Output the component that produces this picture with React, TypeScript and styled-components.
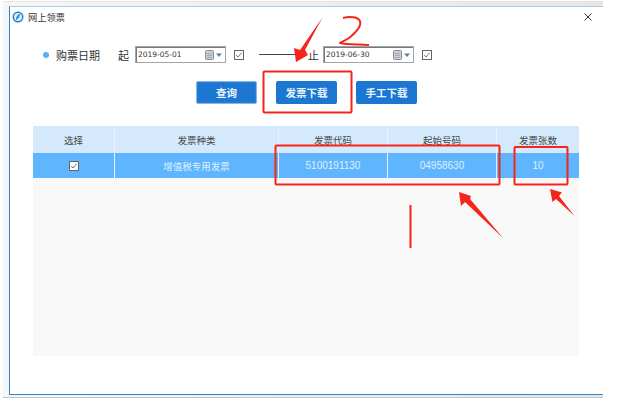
import React from "react";
import styled, { createGlobalStyle } from "styled-components";

const Global = createGlobalStyle`
  html, body { margin: 0; padding: 0; background: #fff; }
  body { font-family: "Noto Sans CJK SC", "Liberation Sans", sans-serif; }
`;

const Page = styled.div`
  position: relative;
  width: 624px;
  height: 412px;
  overflow: hidden;
  background: #fff;
  padding: 1px 21px 14px 3px;
  box-sizing: border-box;
`;

const Shadow = styled.div`
  height: 100%;
  box-sizing: border-box;
  background: linear-gradient(90deg, #f6f6f6, #e6e6e6);
  padding: 4px 0 2px 6px;
  border-bottom: 1px solid #c4c4c4;
  border-top: 1px solid #e4e4e4;
`;

const Window = styled.div`
  height: 100%;
  box-sizing: border-box;
  background: #fff;
  border-left: 1px solid #2f86d0;
  border-top: 1px solid #a9cbe6;
  border-bottom: 1px solid #2f86d0;
  display: flex;
  flex-direction: column;
`;

const TitleBar = styled.div`
  height: 19px;
  display: flex;
  align-items: center;
  padding: 0 11px 0 2px;
  gap: 4px;
  font-size: 9.25px;
  color: #333;
`;

const TitleText = styled.span`
  flex: 1;
  line-height: 12px;
`;

const DateRow = styled.div`
  display: flex;
  align-items: center;
  height: 17px;
  margin-top: 20px;
  padding-left: 33px;
`;

const Dot = styled.span`
  width: 6px;
  height: 6px;
  border-radius: 50%;
  background: #5aaef5;
  margin-right: 7px;
`;

const Label = styled.span<{ $w: number }>`
  width: ${(p) => p.$w}px;
  font-size: 11px;
  line-height: 14px;
  color: #333;
  flex: none;
`;

const DateBox = styled.div`
  width: 91px;
  height: 17px;
  box-sizing: border-box;
  border: 1px solid #a5a5a5;
  box-shadow: inset 1px 1px 0 #777;
  display: flex;
  align-items: center;
  padding: 0 3px 0 2px;
  font-family: "DejaVu Sans", sans-serif;
  font-size: 7.5px;
  color: #333;
  flex: none;
`;

const DateValue = styled.span`
  flex: 1;
`;

const Check = styled.svg<{ $gap?: number }>`
  display: block;
  width: 10px;
  height: 10px;
  flex: none;
  margin-left: ${(p) => p.$gap ?? 0}px;
`;

const Connector = styled.span`
  width: 48px;
  height: 1px;
  background: #444;
  margin: 0 1px 0 15px;
  flex: none;
`;

const ButtonRow = styled.div`
  display: flex;
  align-items: center;
  height: 23px;
  margin-top: 18px;
  padding-left: 186px;
`;

const Button = styled.button<{ $outlined?: boolean; $gap?: number }>`
  width: 61px;
  height: 23px;
  box-sizing: border-box;
  margin-left: ${(p) => p.$gap ?? 0}px;
  padding: 0;
  border: ${(p) => (p.$outlined ? "1px solid #7fb5e6" : "0")};
  border-radius: 2px;
  background: #1b77d1;
  color: #e9f3fb;
  font: 700 10.5px "Noto Sans CJK SC", sans-serif;
  box-shadow: ${(p) => (p.$outlined ? "inset 0 0 0 1px #2f7fc8" : "none")};
`;

const Table = styled.div`
  margin: 22px 0 0 23px;
  width: 546px;
  height: 230px;
  background: #f8f8f8;
`;

const Row = styled.div<{ $head?: boolean }>`
  display: grid;
  grid-template-columns: 82px 164px 109px 109px 82px;
  height: ${(p) => (p.$head ? 27 : 25)}px;
  background: ${(p) => (p.$head ? "#d4e9fb" : "#5fb5fe")};
  color: ${(p) => (p.$head ? "#444" : "#dff0ff")};
  font-size: 9.5px;
`;

const Cell = styled.div<{ $last?: boolean; $mono?: boolean }>`
  display: flex;
  align-items: center;
  justify-content: center;
  box-sizing: border-box;
  border-right: ${(p) => (p.$last ? 0 : "1px solid #e6f2fc")};
  font-family: ${(p) => (p.$mono ? '"Liberation Sans", sans-serif' : "inherit")};
  font-size: ${(p) => (p.$mono ? "10px" : "inherit")};
`;

const Annotations = styled.svg`
  position: absolute;
  left: 0;
  top: 0;
  width: 624px;
  height: 412px;
  pointer-events: none;
`;

const CheckIcon = ({ filled, gap }: { filled?: boolean; gap?: number }) => (
  <Check $gap={gap} viewBox="0 0 10 10">
    <rect x=".5" y=".5" width="9" height="9" fill={filled ? "#fff" : "none"} stroke="#666" />
    <path d="M2.200 5l1.800 2L7.800 2.600" fill="none" stroke="#777" />
  </Check>
);

const CalendarIcon = () => (
  <svg width="17" height="10" viewBox="0 0 17 10">
    <rect x=".5" y=".5" width="8" height="9" rx="1" fill="#c9cfd4" stroke="#8b8f94" />
    <path d="M2 3.500h5M2 5.500h5M2 7.500h5" stroke="#a5abb0" />
    <path d="M11 3.500h6l-3 3.500z" fill="#5b7fa8" />
  </svg>
);

const LogoIcon = () => (
  <svg width="12" height="12" viewBox="0 0 12 12">
    <circle cx="6" cy="6" r="5.500" fill="#1f7fd0" />
    <circle cx="6" cy="6" r="4" fill="#dff0fb" />
    <path d="M3.800 9.200c0-3 1.700-5.700 4.500-6.600-.5 3-1.800 5.700-4.500 6.600z" fill="#2b8ad8" />
  </svg>
);

const CloseIcon = () => (
  <svg width="8" height="8" viewBox="0 0 8 8">
    <path d="M.5.5l7 7M7.500.5l-7 7" stroke="#333" fill="none" />
  </svg>
);

const DateField = ({ value }: { value: string }) => (
  <DateBox>
    <DateValue>{value}</DateValue>
    <CalendarIcon />
  </DateBox>
);

export default function App() {
  return (
    <Page>
      <Global />
      <Shadow>
        <Window>
          <TitleBar>
            <LogoIcon />
            <TitleText>网上领票</TitleText>
            <CloseIcon />
          </TitleBar>
          <DateRow>
            <Dot />
            <Label $w={62}>购票日期</Label>
            <Label $w={17}>起</Label>
            <DateField value="2019-05-01" />
            <CheckIcon gap={8} />
            <Connector />
            <Label $w={15}>止</Label>
            <DateField value="2019-06-30" />
            <CheckIcon gap={8} />
          </DateRow>
          <ButtonRow>
            <Button $outlined>查询</Button>
            <Button $gap={19}>发票下载</Button>
            <Button $gap={19}>手工下载</Button>
          </ButtonRow>
          <Table>
            <Row $head>
              <Cell>选择</Cell>
              <Cell>发票种类</Cell>
              <Cell>发票代码</Cell>
              <Cell>起始号码</Cell>
              <Cell $last>发票张数</Cell>
            </Row>
            <Row>
              <Cell><CheckIcon filled /></Cell>
              <Cell>增值税专用发票</Cell>
              <Cell $mono>5100191130</Cell>
              <Cell $mono>04958630</Cell>
              <Cell $mono $last>10</Cell>
            </Row>
          </Table>
        </Window>
      </Shadow>
      <Annotations viewBox="0 0 624 412">
        <g fill="none" stroke="#f5251c" strokeWidth="2" strokeLinejoin="round">
          <rect x="263.500" y="71.500" width="88" height="41" rx="1" />
          <rect x="275.500" y="145.500" width="224" height="39" rx="1" />
          <rect x="514.500" y="147" width="53" height="37.500" rx="1" />
          <path d="M410.500 205v43" />
          <path d="M343 18C350 16 358 17 360 21C362 27 354 34 349 38C346 40 342 42 340 43C348 45 360 44 369 45" />
        </g>
        <g fill="#f5251c">
          <path d="M322.500 17.500L305 50l3 5-12 7-2-14 6 2z" />
          <path d="M503.500 238.500L470 199l1-3-12-4 2 14 4-4z" />
          <path d="M574.500 216L559 196l3-3.500-12-3.500 2.500 13 3.500-3z" />
        </g>
      </Annotations>
    </Page>
  );
}
